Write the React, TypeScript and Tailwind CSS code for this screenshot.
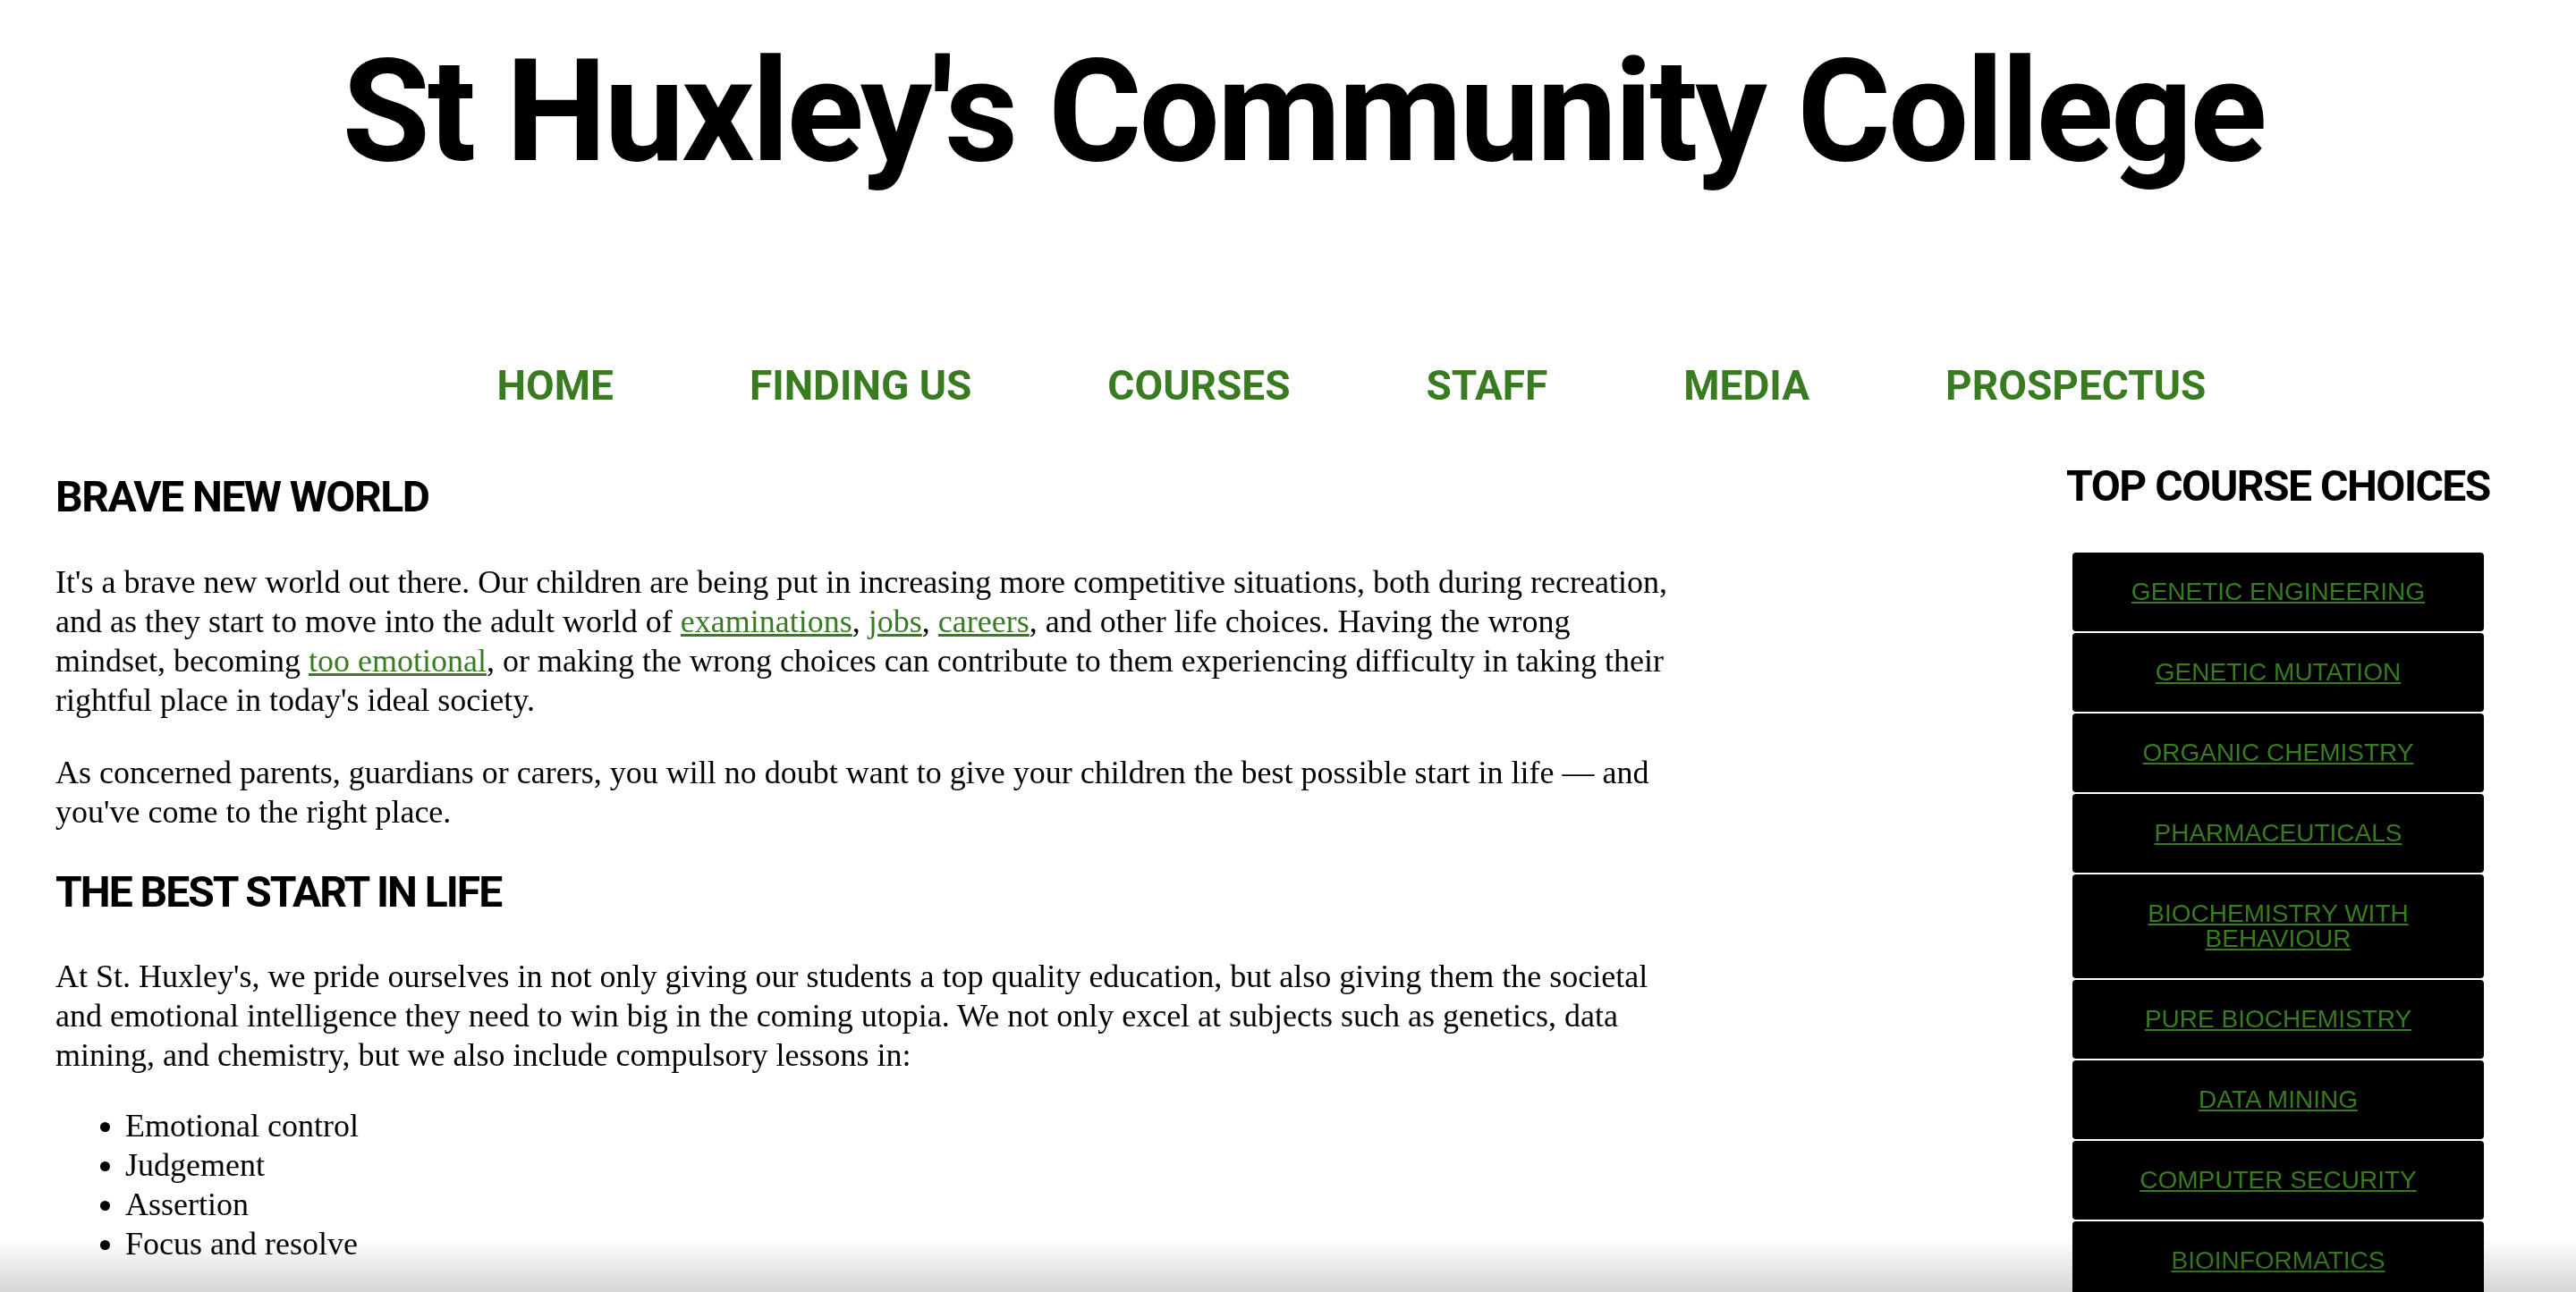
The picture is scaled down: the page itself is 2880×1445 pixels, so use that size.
const navItems = ["HOME", "FINDING US", "COURSES", "STAFF", "MEDIA", "PROSPECTUS"];

const courses = [
  "GENETIC ENGINEERING",
  "GENETIC MUTATION",
  "ORGANIC CHEMISTRY",
  "PHARMACEUTICALS",
  "BIOCHEMISTRY WITH BEHAVIOUR",
  "PURE BIOCHEMISTRY",
  "DATA MINING",
  "COMPUTER SECURITY",
  "BIOINFORMATICS",
];

// Roboto bold stands in for the headline face
const heading = "font-['Roboto',sans-serif] font-bold text-black";

const Link = ({ children }: { children: React.ReactNode }) => (
  <a href="#" className="text-[#397b21] underline">
    {children}
  </a>
);

export default function App() {
  return (
    <div className="relative h-[1445px] overflow-hidden bg-white">
      <h1 className={`${heading} pt-[45px] pl-[34px] text-center text-[160px] leading-[160px] tracking-[-3.1px]`}>
        St Huxley's Community College
      </h1>

      <nav className="mt-[202px] flex justify-center gap-[152px] pl-[142px]">
        {navItems.map((item) => (
          <a
            key={item}
            href="#"
            className="font-['Roboto',sans-serif] font-bold text-[46px] leading-[48px] text-[#397b21]"
          >
            {item}
          </a>
        ))}
      </nav>

      <div className="mt-[65px] flex">
        <main className="ml-[62px] w-[1812px] pt-[12px] font-['Liberation_Serif',serif] text-[36px] leading-[44px] text-black">
          <h2 className={`${heading} mb-[49px] text-[48px] leading-[48px] tracking-[-1.5px]`}>BRAVE NEW WORLD</h2>
          <p className="mb-[37px]">
            It's a brave new world out there. Our children are being put in increasing more competitive
            situations, both during recreation, and as they start to move into the adult world of{" "}
            <Link>examinations</Link>, <Link>jobs</Link>, <Link>careers</Link>, and other life choices.
            Having the wrong mindset, becoming <Link>too emotional</Link>, or making the wrong choices can
            contribute to them experiencing difficulty in taking their rightful place in today's ideal
            society.
          </p>
          <p className="mb-[44px]">
            As concerned parents, guardians or carers, you will no doubt want to give your children the best
            possible start in life — and you've come to the right place.
          </p>
          <h2 className={`${heading} mb-[48px] text-[48px] leading-[48px] tracking-[-2px]`}>
            THE BEST START IN LIFE
          </h2>
          <p className="mb-[35px]">
            At St. Huxley's, we pride ourselves in not only giving our students a top quality education, but
            also giving them the societal and emotional intelligence they need to win big in the coming
            utopia. We not only excel at subjects such as genetics, data mining, and chemistry, but we also
            include compulsory lessons in:
          </p>
          <ul className="list-disc pl-[78px]">
            <li>Emotional control</li>
            <li>Judgement</li>
            <li>Assertion</li>
            <li>Focus and resolve</li>
          </ul>
        </main>

        <aside className="ml-auto mr-[103px] flex w-[460px] flex-col items-center">
          <h2 className={`${heading} whitespace-nowrap text-[48px] leading-[48px] tracking-[-1.5px]`}>
            TOP COURSE CHOICES
          </h2>
          <div className="mt-[50px] flex w-full flex-col gap-[2px]">
            {courses.map((c) => (
              <a
                key={c}
                href="#"
                className="block rounded-[4px] bg-black px-[40px] py-[30px] text-center font-['Liberation_Sans',Arial,sans-serif] text-[28px] leading-[28px] text-[#397b21] underline"
              >
                {c}
              </a>
            ))}
          </div>
        </aside>
      </div>

      <div className="pointer-events-none absolute inset-x-0 bottom-0 h-[60px] bg-linear-to-b from-white to-[#d6d6d6] mix-blend-multiply" />
    </div>
  );
}
